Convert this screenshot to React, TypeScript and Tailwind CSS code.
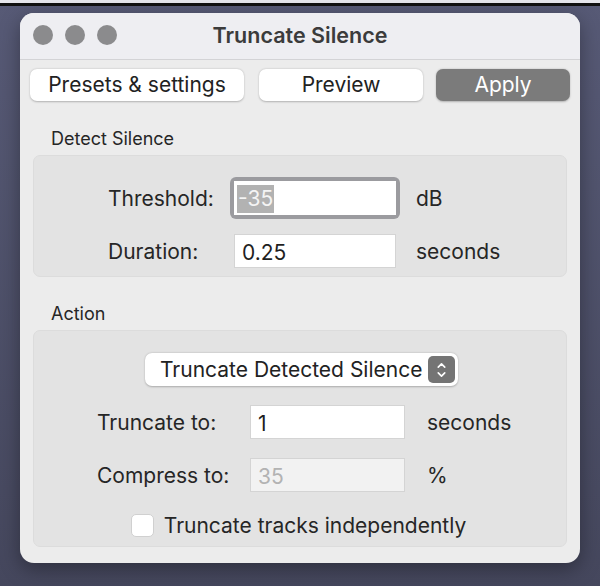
import { ChevronUp, ChevronDown } from "lucide-react";

const font = { fontFamily: "Inter, 'Noto Sans', sans-serif" };

function Field({ value, disabled = false }: { value: string; disabled?: boolean }) {
  return (
    <div
      className={`h-[34px] flex items-center px-[7px] pt-[3px] text-[21px] border border-[#d4d4d4] ${
        disabled ? "bg-[#f2f2f2] text-[#b3b3b3]" : "bg-white text-[#1f1f1f]"
      }`}
    >
      {value}
    </div>
  );
}

export default function App() {
  return (
    <div className="w-[600px] h-[586px] flex flex-col bg-gradient-to-b from-[#575a76] to-[#45475d] overflow-hidden" style={font}>
      <div className="h-[3px] bg-[#e6e6ec]" />
      <div className="h-[3px] bg-[#111]" />

      <div className="pl-[20px] pt-[7px]">
        <div className="w-[560px] h-[550px] rounded-[14px] overflow-hidden bg-[#ececec] shadow-[0_6px_20px_rgba(0,0,0,0.35)] flex flex-col">
          {/* title bar */}
          <div className="h-[47px] shrink-0 bg-[#eeeef2] border-b border-[#d3d3d6] relative flex items-center justify-center">
            <div className="absolute left-[13px] top-[12px] flex gap-[12px]">
              <div className="w-[20px] h-[20px] rounded-full bg-[#8b8b8d]" />
              <div className="w-[20px] h-[20px] rounded-full bg-[#8b8b8d]" />
              <div className="w-[20px] h-[20px] rounded-full bg-[#8b8b8d]" />
            </div>
            <span className="text-[21.5px] font-semibold text-[#3b3b3b] -mt-[2px]">Truncate Silence</span>
          </div>

          {/* action buttons */}
          <div className="flex pl-[10px] pt-[9px] gap-[15px]">
            <button className="w-[214px] h-[32px] rounded-[7px] bg-white text-[21px] text-[#222] shadow-[0_0.5px_2px_rgba(0,0,0,0.25)]">
              Presets &amp; settings
            </button>
            <button className="w-[164px] h-[32px] rounded-[7px] bg-white text-[21px] text-[#222] shadow-[0_0.5px_2px_rgba(0,0,0,0.25)]">
              Preview
            </button>
            <button className="ml-[-2px] w-[134px] h-[32px] rounded-[7px] bg-[#7b7b7b] text-[21px] text-white shadow-[0_0.5px_2px_rgba(0,0,0,0.25)]">
              Apply
            </button>
          </div>

          {/* Detect Silence */}
          <div className="mt-[27px] h-[20px] pl-[31px] flex items-center text-[18px] text-[#262626]">Detect Silence</div>
          <div className="mt-[7px] mx-[13px] h-[122px] rounded-[7px] bg-[#e3e3e3] border border-[#dcdcdc] pt-[25px]">
            <div className="grid grid-cols-[126px_162px_auto] items-center gap-y-[19px] pl-[74px] text-[21px] text-[#262626]">
              <span className="pt-[2px]">Threshold:</span>
              <div className="relative">
                <div className="absolute -inset-[4px] rounded-[6px] bg-[#9b9b9f]" />
                <div className="relative h-[34px] flex items-center px-[3px] pt-[2px] bg-white text-[21px]">
                  <span className="bg-[#b2b2b2] text-[#f4f4f4] px-[1px] leading-[28px]">-35</span>
                </div>
              </div>
              <span className="pl-[20px] pt-[2px]">dB</span>

              <span className="pt-[2px]">Duration:</span>
              <Field value="0.25" />
              <span className="pl-[20px] pt-[2px]">seconds</span>
            </div>
          </div>

          {/* Action */}
          <div className="mt-[26px] h-[20px] pl-[31px] flex items-center text-[18px] text-[#262626]">Action</div>
          <div className="mt-[7px] mx-[13px] h-[217px] rounded-[7px] bg-[#e3e3e3] border border-[#dcdcdc] pt-[22px] flex flex-col">
            <div className="flex justify-center pl-[3px]">
              <div className="w-[313px] h-[33px] rounded-[7px] bg-white shadow-[0_0.5px_2px_rgba(0,0,0,0.25)] flex items-center pl-[15px] pr-[3px] text-[21px] text-[#222]">
                <span className="flex-1">Truncate Detected Silence</span>
                <div className="w-[27px] h-[27px] rounded-[5px] bg-[#747474] flex flex-col items-center justify-center text-white">
                  <ChevronUp size={13} strokeWidth={3} className="-mb-[2px]" />
                  <ChevronDown size={13} strokeWidth={3} className="-mt-[2px]" />
                </div>
              </div>
            </div>

            <div className="mt-[19px] grid grid-cols-[153px_155px_auto] items-center gap-y-[19px] pl-[63px] text-[21px] text-[#262626]">
              <span className="pt-[2px]">Truncate to:</span>
              <Field value="1" />
              <span className="pl-[22px] pt-[2px]">seconds</span>

              <span className="pt-[2px]">Compress to:</span>
              <Field value="35" disabled />
              <span className="pl-[22px] pt-[2px]">%</span>
            </div>

            <div className="mt-[18px] flex items-center justify-center gap-[10px] text-[21px] text-[#262626] pr-[3px]">
              <div className="w-[23px] h-[23px] rounded-[5px] bg-white border border-[#d0d0d0]" />
              <span>Truncate tracks independently</span>
            </div>
          </div>
        </div>
      </div>
    </div>
  );
}
